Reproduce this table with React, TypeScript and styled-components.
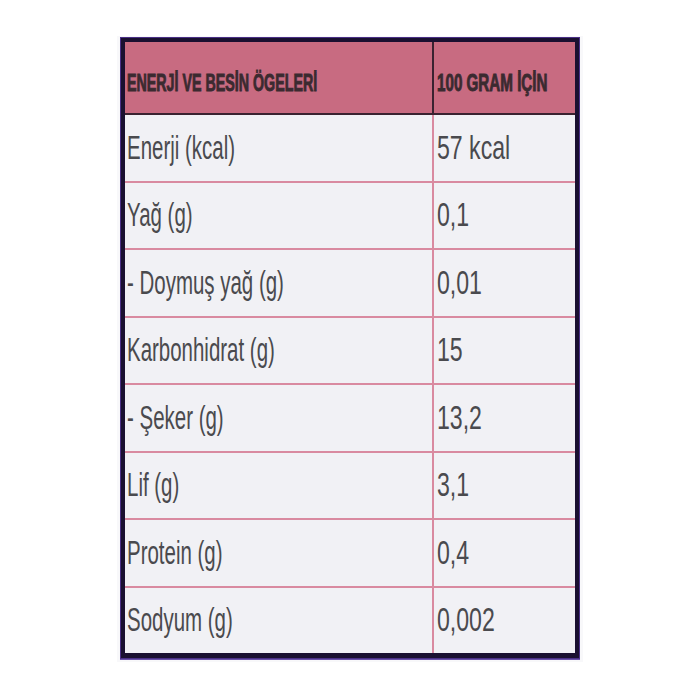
import React from "react";
import styled, { createGlobalStyle } from "styled-components";

const Global = createGlobalStyle`
  html, body { margin: 0; padding: 0; background: #ffffff; }
  body { font-family: "Liberation Sans", Arial, sans-serif; }
`;

const Page = styled.div`
  width: 700px;
  height: 700px;
  padding: 36px 0 0 117px;
  box-sizing: border-box;
`;

const Panel = styled.div`
  width: 466px;
  height: 626px;
  padding: 2px 4px 0 4px;
  box-sizing: border-box;
  background: #f8f8fa;
`;

const Table = styled.div`
  width: 458px;
  height: 620px;
  box-sizing: border-box;
  border: 4px solid #1a1030;
  border-bottom-width: 5px;
  box-shadow: 0 0 0 1px #4a2f86, 0 1px 0 1px #6a52a8;
  background: #f1f1f5;
  display: flex;
  flex-direction: column;
`;

const HeaderRow = styled.div`
  display: flex;
  height: 73px;
  flex: none;
  background: #c86b81;
  border-bottom: 2px solid #3a2230;
  box-sizing: border-box;
`;

const BodyRow = styled.div<{ $last?: boolean }>`
  display: flex;
  flex: 1 1 0;
  border-bottom: ${(p) => (p.$last ? "none" : "2px solid #d98aa0")};
`;

const Cell = styled.div<{ $right?: boolean; $head?: boolean }>`
  box-sizing: border-box;
  width: ${(p) => (p.$right ? "143px" : "307px")};
  flex: none;
  display: flex;
  align-items: center;
  padding-left: ${(p) => (p.$right ? "3px" : "2px")};
  padding-top: ${(p) => (p.$head ? "12px" : "0")};
  border-left: ${(p) =>
    p.$right ? (p.$head ? "2px solid #3a2230" : "2px solid #d98aa0") : "none"};
  overflow: hidden;
`;

const HeadText = styled.span<{ $scale: number }>`
  display: inline-block;
  white-space: nowrap;
  font-family: "Liberation Sans", Arial, sans-serif;
  font-weight: 700;
  font-size: 23px;
  color: #3b2a30;
  transform: scaleX(${(p) => p.$scale});
  transform-origin: left center;
  -webkit-text-stroke: 0.9px #3b2a30;
`;

const BodyText = styled.span<{ $scale: number }>`
  display: inline-block;
  white-space: nowrap;
  font-family: "Liberation Sans", Arial, sans-serif;
  font-size: 33px;
  color: #4a4a4e;
  transform: scaleX(${(p) => p.$scale});
  transform-origin: left center;
`;

const rows: [string, string][] = [
  ["Enerji (kcal)", "57 kcal"],
  ["Yağ (g)", "0,1"],
  ["- Doymuş yağ (g)", "0,01"],
  ["Karbonhidrat (g)", "15"],
  ["- Şeker (g)", "13,2"],
  ["Lif (g)", "3,1"],
  ["Protein (g)", "0,4"],
  ["Sodyum (g)", "0,002"],
];

export default function App() {
  return (
    <>
      <Global />
      <Page>
        <Panel>
          <Table>
            <HeaderRow>
              <Cell $head>
                <HeadText $scale={0.62}>ENERJİ VE BESİN ÖGELERİ</HeadText>
              </Cell>
              <Cell $right $head>
                <HeadText $scale={0.66}>100 GRAM İÇİN</HeadText>
              </Cell>
            </HeaderRow>
            {rows.map(([k, v], i) => (
              <BodyRow key={k} $last={i === rows.length - 1}>
                <Cell>
                  <BodyText $scale={0.62}>{k}</BodyText>
                </Cell>
                <Cell $right>
                  <BodyText $scale={0.7}>{v}</BodyText>
                </Cell>
              </BodyRow>
            ))}
          </Table>
        </Panel>
      </Page>
    </>
  );
}
